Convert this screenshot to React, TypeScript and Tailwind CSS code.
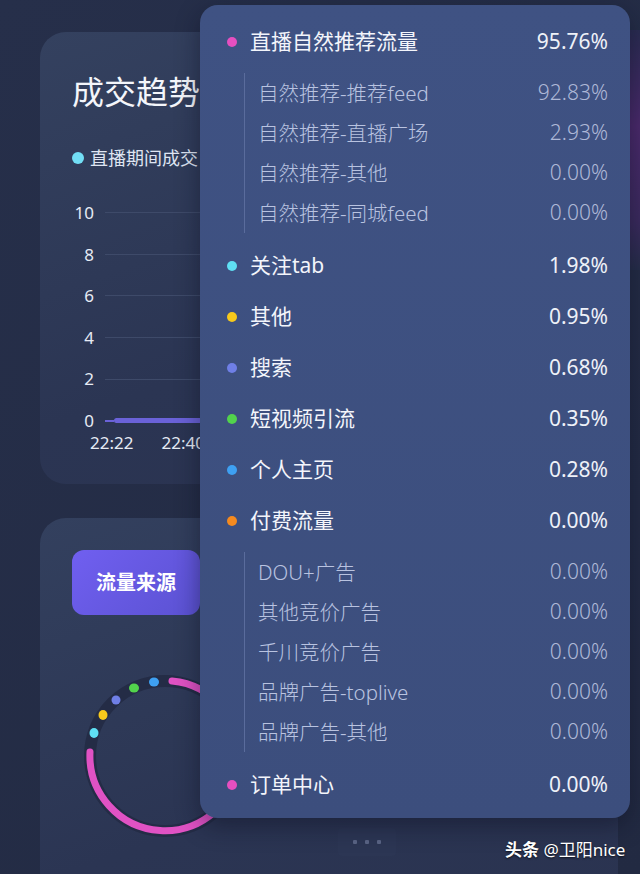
import React from 'react'

type SubRow = { label: string; value: string }
type Row = { label: string; value: string; dot: string; children?: SubRow[] }

const rows: Row[] = [
  {
    label: '直播自然推荐流量',
    value: '95.76%',
    dot: 'bg-[#e64fc0]',
    children: [
      { label: '自然推荐-推荐feed', value: '92.83%' },
      { label: '自然推荐-直播广场', value: '2.93%' },
      { label: '自然推荐-其他', value: '0.00%' },
      { label: '自然推荐-同城feed', value: '0.00%' },
    ],
  },
  { label: '关注tab', value: '1.98%', dot: 'bg-[#5fe0f4]' },
  { label: '其他', value: '0.95%', dot: 'bg-[#f7c91c]' },
  { label: '搜索', value: '0.68%', dot: 'bg-[#6f7fe6]' },
  { label: '短视频引流', value: '0.35%', dot: 'bg-[#52d34c]' },
  { label: '个人主页', value: '0.28%', dot: 'bg-[#3ea0f2]' },
  {
    label: '付费流量',
    value: '0.00%',
    dot: 'bg-[#f58a1f]',
    children: [
      { label: 'DOU+广告', value: '0.00%' },
      { label: '其他竞价广告', value: '0.00%' },
      { label: '千川竞价广告', value: '0.00%' },
      { label: '品牌广告-toplive', value: '0.00%' },
      { label: '品牌广告-其他', value: '0.00%' },
    ],
  },
  { label: '订单中心', value: '0.00%', dot: 'bg-[#e64fc0]' },
]

const yTicks = ['10', '8', '6', '4', '2', '0']

const font = { fontFamily: '"Noto Sans", "Noto Sans CJK SC", sans-serif' }

export default function App() {
  return (
    <div
      className="relative h-[874px] w-[640px] overflow-hidden bg-[linear-gradient(135deg,#262f4a,#222a42)] text-white"
      style={font}
    >
      {/* purple glow peeking on the right */}
      <div className="absolute right-0 top-[30px] h-[240px] w-[24px] bg-[linear-gradient(180deg,#2a2c52,#4b2a6c_40%,#3b2b5e_80%,#262e4a)]" />

      {/* trend card */}
      <div className="ml-[40px] mt-[32px] h-[452px] w-[578px] rounded-[26px] bg-[linear-gradient(160deg,#34415f,#2b3553_60%,#2a3350)] px-[32px] pt-[40px]">
        <div className="text-[32px] leading-[40px] text-[#f4f6fb]">成交趋势</div>
        <div className="mt-[34px] flex h-[24px] items-center">
          <span className="h-[12px] w-[12px] rounded-full bg-[#72def5]" />
          <span className="ml-[6px] text-[18px] text-[#dfe5f2]">直播期间成交</span>
        </div>
        <div className="mt-[22px] flex flex-col">
          {yTicks.map((t) => (
            <div key={t} className="flex h-[41.6px] items-center">
              <span className="w-[22px] text-right text-[17px] text-[#e6ebf5]">{t}</span>
              {t === '0' ? (
                <div className="ml-[11px] flex flex-1 items-center">
                  <div className="h-[2px] w-[9px] bg-[#6a62d8]" />
                  <div className="h-[5px] flex-1 rounded-full bg-[#6a62d8]" />
                </div>
              ) : (
                <div className="ml-[11px] h-px flex-1 bg-[#3e4a69]" />
              )}
            </div>
          ))}
        </div>
        <div className="-mt-[10px] ml-[18px] flex gap-[28px] text-[17px] leading-[22px] text-[#e6ebf5]">
          <span>22:22</span>
          <span>22:40</span>
        </div>
      </div>

      {/* traffic card */}
      <div className="ml-[40px] mt-[34px] h-[400px] w-[578px] rounded-[26px] bg-[linear-gradient(160deg,#33405e,#2b3553_60%,#2a3350)] px-[32px] pt-[32px]">
        <div className="flex h-[65px] w-[128px] items-center justify-center rounded-[12px] bg-[linear-gradient(135deg,#705ff0,#5b52d2)] text-[20px] font-bold text-white">
          流量来源
        </div>
        <svg width="180" height="180" viewBox="0 0 180 180" className="ml-[8px] mt-[55px]">
          <circle cx="85" cy="86" r="75" fill="none" stroke="#242c46" strokeWidth="12" />
          <path
            d="M 92 11 A 75 75 0 1 1 10 82"
            fill="none"
            stroke="#e052c4"
            strokeWidth="7"
            strokeLinecap="round"
          />
          <ellipse cx="14" cy="63" rx="4.5" ry="5" fill="#5fe0f4" />
          <ellipse cx="23" cy="45" rx="4.5" ry="5" fill="#f7c91c" />
          <ellipse cx="36" cy="30" rx="4.5" ry="4.5" fill="#6f7fe6" />
          <ellipse cx="54" cy="18" rx="5" ry="4.5" fill="#52d34c" />
          <ellipse cx="74" cy="12" rx="5" ry="4.5" fill="#3ea0f2" />
        </svg>
      </div>

      {/* pager */}
      <div className="absolute left-[338px] top-[828px] flex h-[28px] w-[58px] items-center justify-center gap-[8px] rounded-[4px] bg-[#2c3654]">
        <span className="h-[4px] w-[4px] rounded-[1px] bg-[#5a6585]" />
        <span className="h-[4px] w-[4px] rounded-[1px] bg-[#5a6585]" />
        <span className="h-[4px] w-[4px] rounded-[1px] bg-[#5a6585]" />
      </div>

      {/* tooltip */}
      <div className="absolute left-[200px] top-[5px] w-[430px] rounded-[18px] bg-[linear-gradient(180deg,#3f5283,#3c4e7d)] pb-[8px] pl-[27px] pr-[22px] pt-[11px] shadow-[0_8px_24px_rgba(10,14,30,0.45)]">
        {rows.map((r) => (
          <div key={r.label}>
            <div className="flex h-[51px] items-center">
              <span className={`h-[10px] w-[10px] rounded-full ${r.dot}`} />
              <span className="ml-[13px] flex-1 text-[21px] text-[#f3f5fb]">{r.label}</span>
              <span className="text-[21px] text-[#eef1f8]">{r.value}</span>
            </div>
            {r.children && (
              <div className="mb-[7px] ml-[17px] mt-[6px] border-l border-[#5a6c9c]">
                {r.children.map((c) => (
                  <div key={c.label} className="flex h-[40px] items-center pl-[13px]">
                    <span className="flex-1 text-[20.5px] font-light text-[#b9c3e0]">{c.label}</span>
                    <span className="text-[21px] font-light text-[#aeb8d7]">{c.value}</span>
                  </div>
                ))}
              </div>
            )}
          </div>
        ))}
      </div>

      {/* watermark */}
      <div className="absolute left-[505px] top-[838px] text-[17px] leading-[24px] text-white [text-shadow:0_1px_2px_rgba(0,0,0,0.7)]">
        <span className="font-bold">头条</span> @卫阳nice
      </div>
    </div>
  )
}
